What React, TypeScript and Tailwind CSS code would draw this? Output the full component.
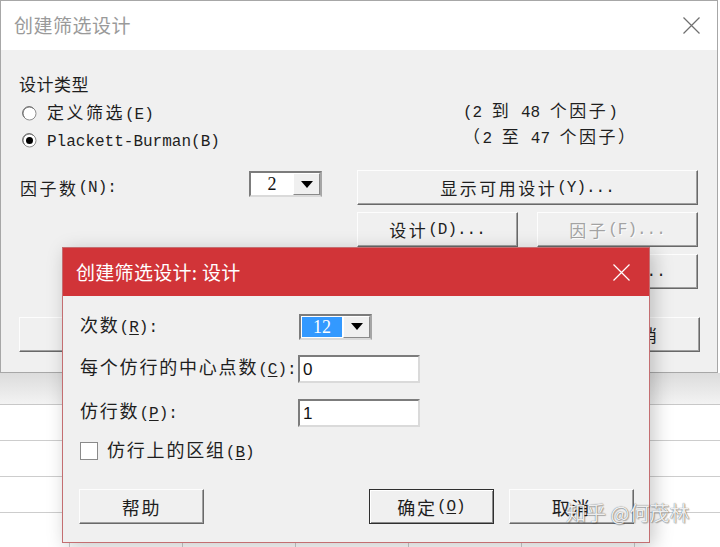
import type { ReactNode } from 'react';

const CJK_RE = /[\u3000-\u303f\u4e00-\u9fff\uff00-\uffef]/;
const SPLIT_RE = /[\u3000-\u303f\u4e00-\u9fff\uff00-\uffef]+|[^\u3000-\u303f\u4e00-\u9fff\uff00-\uffef]+/g;

// CJK runs get wider tracking, latin runs a mono face (SimSun-like metrics)
function Mixed({ text, big = false, ul = false }: { text: string; big?: boolean; ul?: boolean }) {
  const parts = text.match(SPLIT_RE) ?? [];
  return (
    <>
      {parts.map((p, i) => {
        if (CJK_RE.test(p)) {
          return (
            <span key={i} className={big ? 'text-[18px] tracking-[1.8px]' : 'text-[17px] tracking-[2.5px]'}>
              {p}
            </span>
          );
        }
        const m = ul ? p.match(/^(.*\()([A-Z])(\).*)$/) : null;
        return (
          <span key={i} className="font-['Liberation_Mono',monospace] text-[16px] whitespace-pre">
            {m ? (
              <>
                {m[1]}
                <u className="underline-offset-2">{m[2]}</u>
                {m[3]}
              </>
            ) : (
              p
            )}
          </span>
        );
      })}
    </>
  );
}

function Btn({
  children,
  className = '',
  def = false,
  disabled = false,
}: {
  children: ReactNode;
  className?: string;
  def?: boolean;
  disabled?: boolean;
}) {
  const edge = def
    ? 'border border-[#2f2f2f] shadow-[inset_1px_1px_0_#fff,inset_-1px_-1px_0_#8a8a8a]'
    : 'border border-t-[#fdfdfd] border-l-[#fdfdfd] border-r-[#696969] border-b-[#696969] shadow-[inset_-1px_-1px_0_#a0a0a0]';
  return (
    <div
      className={`flex h-[35px] items-center justify-center bg-[#f0f0f0] ${edge} ${
        disabled ? 'text-[#a3a3a3] [text-shadow:1px_1px_0_#fff]' : 'text-[#1e1e1e]'
      } ${className}`}
    >
      {children}
    </div>
  );
}

function Triangle() {
  return (
    <svg width="12" height="7" viewBox="0 0 12 7">
      <path d="M0 0h12L6 7z" fill="#000" />
    </svg>
  );
}

function Combo({ value, selected = false, className = '' }: { value: string; selected?: boolean; className?: string }) {
  return (
    <div
      className={`flex h-[26px] w-[73px] border-2 border-t-[#7c7c7c] border-l-[#7c7c7c] border-r-[#a6a6a6] border-b-[#dadada] bg-white ${className}`}
    >
      <div className="flex flex-1 items-center justify-center p-[1px]">
        <div
          className={`flex h-full w-full items-center justify-center font-['Liberation_Serif',serif] text-[18px] leading-none ${
            selected ? 'bg-[#3399ff] text-white' : 'text-[#111]'
          }`}
        >
          {value}
        </div>
      </div>
      <div className="flex w-[27px] items-center justify-center border border-t-white border-l-white border-r-[#8a8a8a] border-b-[#8a8a8a] bg-[#f0f0f0]">
        <Triangle />
      </div>
    </div>
  );
}

function Field({ value }: { value: string }) {
  return (
    <div className="flex h-[28px] w-[122px] shrink-0 items-center border-2 border-t-[#7c7c7c] border-l-[#7c7c7c] border-r-[#dadada] border-b-[#dadada] bg-white pl-[3px] font-['Liberation_Sans',sans-serif] text-[17px] text-[#111]">
      {value}
    </div>
  );
}

function Radio({ on = false }: { on?: boolean }) {
  return (
    <svg width="15" height="15" viewBox="0 0 15 15">
      <circle cx="7.5" cy="7.5" r="6.5" fill="#fff" stroke="#8d8d8d" />
      <path d="M2.5 11.5A6 6 0 0 1 11.5 2.5" fill="none" stroke="#6a6a6a" />
      {on && <circle cx="7.5" cy="7.5" r="3.5" fill="#000" />}
    </svg>
  );
}

function CloseX({ color, size = 17 }: { color: string; size?: number }) {
  return (
    <svg width={size} height={size} viewBox="0 0 17 17">
      <path d="M0.5 0.5l16 16M16.5 0.5l-16 16" stroke={color} strokeWidth="1.2" fill="none" />
    </svg>
  );
}

const cols = [70, 113, 113, 113, 113, 113, 113];

export default function App() {
  return (
    <div className="relative h-[547px] w-[720px] overflow-hidden bg-white font-['Noto_Sans_CJK_SC',sans-serif] text-[#1e1e1e]">
      {/* main window */}
      <div className="w-[718px] border border-[#a7a7a7] bg-[#f0f0f0]">
        <div className="flex h-[49px] items-center justify-between bg-white pl-[13px] pr-[17px]">
          <span className="text-[19px] tracking-[0.5px] text-[#9a9a9a]">创建筛选设计</span>
          <CloseX color="#6f6f6f" />
        </div>
        <div className="h-[322px]">
          <div className="flex">
            <div className="w-[462px] pl-[18px] pt-[24px]">
              <div className="h-[20px] text-[17px] leading-[20px] tracking-[0.5px]">设计类型</div>
              <div className="mt-[6px] flex h-[27px] items-center gap-[10px] pl-[3px] leading-[20px]">
                <Radio />
                <span>
                  <Mixed text="定义筛选(E)" />
                </span>
              </div>
              <div className="flex h-[27px] items-center gap-[10px] pl-[3px] leading-[20px]">
                <Radio on />
                <span>
                  <Mixed text="Plackett-Burman(B)" />
                </span>
              </div>
            </div>
            <div className="flex flex-col gap-[6px] pt-[50px] leading-[20px]">
              <div className="h-[20px]">
                <Mixed text="(2 到 48 个因子)" />
              </div>
              <div className="h-[20px]">
                <Mixed text="（2 至 47 个因子）" />
              </div>
            </div>
          </div>

          <div className="mt-[16px] flex">
            <div className="flex w-[356px] items-start pl-[19px] pr-[35px]">
              <div className="flex h-[35px] flex-1 items-center leading-[20px]">
                <Mixed text="因子数(N):" />
              </div>
              <Combo value="2" className="mt-[1px]" />
            </div>
            <div className="grid w-[341px] grid-cols-2 gap-x-[19px] gap-y-[7px] leading-[20px]">
              <Btn className="col-span-2">
                <Mixed text="显示可用设计(Y)..." />
              </Btn>
              <Btn>
                <Mixed text="设计(D)..." />
              </Btn>
              <Btn disabled>
                <Mixed text="因子(F)..." />
              </Btn>
              <Btn>
                <Mixed text="选项(P)..." />
              </Btn>
              <Btn>
                <Mixed text="结果(S)..." />
              </Btn>
            </div>
          </div>

          <div className="mt-[28px] flex pl-[18px] pr-[17px] leading-[20px]">
            <Btn className="w-[161px]">
              <Mixed text="帮助" />
            </Btn>
            <div className="ml-auto flex gap-[15px]">
              <Btn def className="w-[120px]">
                <Mixed text="确定(O)" />
              </Btn>
              <Btn className="w-[120px]">
                <Mixed text="取消" />
              </Btn>
            </div>
          </div>
        </div>
      </div>

      {/* worksheet behind */}
      <div>
        <div className="flex h-[32px] border-b border-[#c8c8c8] bg-linear-to-b from-[#dcdcdc] to-[#f3f3f3]">
          {cols.map((w, i) => (
            <div key={i} className="h-full shrink-0 border-r border-[#c8c8c8]" style={{ width: w }} />
          ))}
        </div>
        {[0, 1, 2, 3].map((r) => (
          <div key={r} className="flex h-[36px] border-b border-[#cdcdcd]">
            {cols.map((w, i) => (
              <div key={i} className="h-full shrink-0 border-r border-[#cdcdcd]" style={{ width: w }} />
            ))}
          </div>
        ))}
      </div>

      {/* design sub-dialog */}
      <div className="absolute left-[62px] top-[247px] h-[296px] w-[588px] border border-[#c46e71] bg-[#f0f0f0] shadow-[4px_4px_18px_rgba(0,0,0,0.22)]">
        <div className="flex h-[48px] items-center justify-between bg-[#d13438] pl-[13px] pr-[19px]">
          <span className="text-[19px] tracking-[0.3px] text-white">创建筛选设计: 设计</span>
          <CloseX color="#fff" />
        </div>
        <div className="pl-[16px] pr-[15px] pt-[18px] leading-[23px]">
          <div className="flex h-[25px] items-center pl-[1px]">
            <div className="w-[219px]">
              <Mixed text="次数(R):" big ul />
            </div>
            <Combo value="12" selected />
          </div>
          <div className="mt-[16px] flex items-start pl-[1px]">
            <div className="w-[218px] whitespace-nowrap">
              <Mixed text="每个仿行的中心点数(C):" big ul />
            </div>
            <Field value="0" />
          </div>
          <div className="mt-[16px] flex items-start pl-[1px]">
            <div className="w-[218px]">
              <Mixed text="仿行数(P):" big ul />
            </div>
            <Field value="1" />
          </div>
          <div className="mt-[15px] flex h-[18px] items-center gap-[9px] pl-[1px]">
            <div className="h-[18px] w-[18px] border border-[#8a8a8a] bg-white" />
            <span>
              <Mixed text="仿行上的区组(B)" big ul />
            </span>
          </div>
          <div className="mt-[29px] flex leading-[20px]">
            <Btn className="w-[125px]">
              <Mixed text="帮助" big />
            </Btn>
            <div className="ml-auto flex gap-[15px]">
              <Btn def className="w-[125px]">
                <Mixed text="确定(O)" big ul />
              </Btn>
              <Btn className="w-[125px]">
                <Mixed text="取消" big />
              </Btn>
            </div>
          </div>
        </div>
      </div>

      {/* watermark */}
      <div className="absolute left-[566px] top-[499px] whitespace-nowrap text-[20px] leading-[28px] text-white/90 [text-shadow:0_0_1px_rgba(0,0,0,0.7),1px_1px_1px_rgba(0,0,0,0.25)]">
        知乎 @何茂林
      </div>
    </div>
  );
}
